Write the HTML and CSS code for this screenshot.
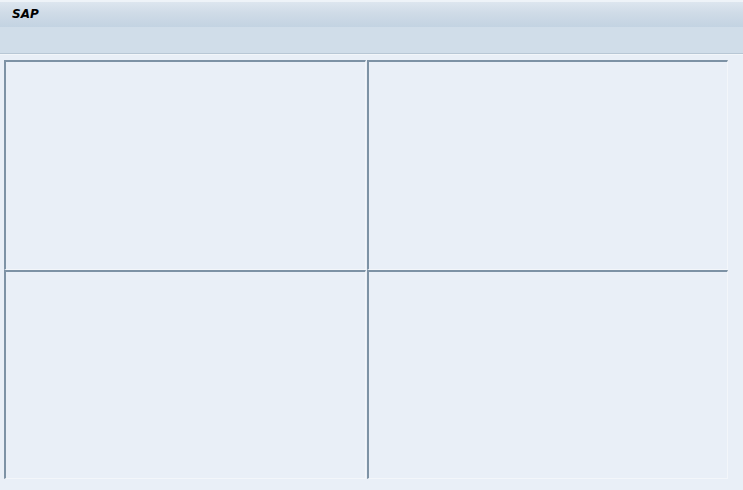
FILE: index.html
```html
<!DOCTYPE html>
<html>
<head>
<meta charset="utf-8">
<link rel="stylesheet" href="styles.css">
</head>
<body>
<div class="app">
  <div class="titlebar"><span class="title">SAP</span></div>
  <div class="toolbar"></div>
  <div class="content">
    <div class="grid">
      <div class="panel"></div>
      <div class="panel"></div>
      <div class="panel"></div>
      <div class="panel"></div>
    </div>
  </div>
</div>
</body>
</html>
```
FILE: styles.css
```css
html, body {
  margin: 0;
  padding: 0;
}
body {
  width: 743px;
  height: 490px;
  overflow: hidden;
  background: #e9eff7;
  font-family: "DejaVu Sans", Verdana, sans-serif;
}
.app {
  display: flex;
  flex-direction: column;
  height: 490px;
}
.titlebar {
  height: 27px;
  box-sizing: border-box;
  border-top: 2px solid #eef3f8;
  background: linear-gradient(to bottom, #dde6ef 0%, #cfdbe7 45%, #c3d3e2 100%);
  display: flex;
  align-items: center;
  padding-left: 12px;
}
.title {
  font-size: 12px;
  font-weight: bold;
  font-style: italic;
  color: #000;
  margin-top: -2px;
}
.toolbar {
  height: 26px;
  background: #d0dde9;
  border-bottom: 1px solid #b8c7d5;
}
.content {
  flex: 1;
  padding: 5px 0 0 4px;
  border-top: 1px solid #f2f6fa;
}
.grid {
  display: grid;
  grid-template-columns: 362px 361px;
  grid-template-rows: 210px 209px;
  column-gap: 1px;
}
.panel {
  box-sizing: border-box;
  border-top: 2px solid #7d92a5;
  border-left: 2px solid #7d92a5;
  border-right: 1px solid #f3f6fa;
  border-bottom: 1px solid #f3f6fa;
  background: #e9eff7;
}
```
